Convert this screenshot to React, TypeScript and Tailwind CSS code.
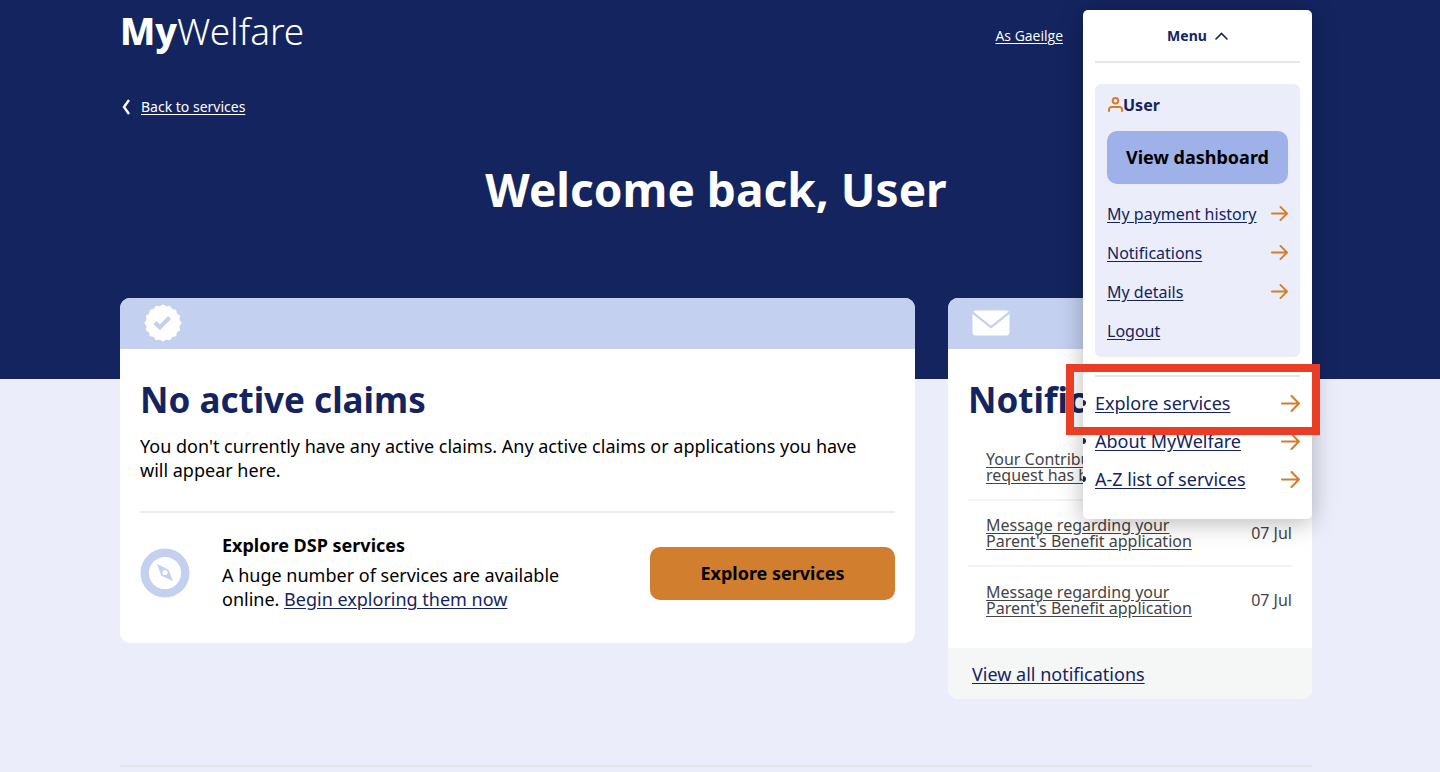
const accountLinks = [
  { label: 'My payment history', arrow: true },
  { label: 'Notifications', arrow: true },
  { label: 'My details', arrow: true },
  { label: 'Logout', arrow: false },
]

const siteLinks = ['Explore services', 'About MyWelfare', 'A-Z list of services']

const notifications = [
  { title: 'Your Contribution Record request has been received', date: '07 Jul' },
  { title: "Message regarding your Parent's Benefit application", date: '07 Jul' },
  { title: "Message regarding your Parent's Benefit application", date: '07 Jul' },
]

function sealPath(points: number, outer: number, inner: number) {
  const steps = points * 2
  const coords = Array.from({ length: steps }, (_, i) => {
    const r = i % 2 ? inner : outer
    const a = (i / steps) * Math.PI * 2
    return `${(19 + r * Math.cos(a)).toFixed(2)} ${(19 + r * Math.sin(a)).toFixed(2)}`
  })
  return `M${coords.join('L')}Z`
}

function SealIcon() {
  return (
    <svg width="38" height="38" viewBox="0 0 38 38" aria-hidden="true">
      <path d={sealPath(16, 17.8, 16)} fill="#fff" stroke="#fff" strokeWidth="1.4" strokeLinejoin="round" />
      <path d="M11 18.5l5 5 9.5-10" fill="none" stroke="#c4d0f0" strokeWidth="4" />
    </svg>
  )
}

function MailIcon() {
  return (
    <svg width="38" height="26" viewBox="0 0 38 26" aria-hidden="true">
      <rect x="0.5" y="0.5" width="37" height="25" rx="3.5" fill="#fff" />
      <path d="M0 2.2L19 17 38 2.2" fill="none" stroke="#c4d0f0" strokeWidth="2.2" />
    </svg>
  )
}

function CompassIcon() {
  return (
    <svg width="50" height="50" viewBox="0 0 50 50" className="shrink-0" aria-hidden="true">
      <circle cx="25" cy="25" r="20.3" fill="#fff" stroke="#c4d0f0" strokeWidth="8.4" />
      <path d="M17 16l11.6 5.8L33 33l-11.6-5.2z" fill="#c4d0f0" />
      <circle cx="25" cy="24.5" r="2.6" fill="#fff" />
    </svg>
  )
}

function UserIcon() {
  return (
    <svg width="16" height="16" viewBox="0 0 16 16" fill="none" stroke="#d17f2e" strokeWidth="2" strokeLinecap="round" aria-hidden="true">
      <circle cx="8.5" cy="3.8" r="2.8" />
      <path d="M2 14v-1.500a2.500 2.500 0 0 1 2.500-2.500h8a2.500 2.500 0 0 1 2.500 2.500v1.500" />
    </svg>
  )
}

function Arrow({ size }: { size: number }) {
  return (
    <svg width={size} height={size} viewBox="0 0 18 18" fill="none" stroke="#d17f2e" strokeWidth="2" strokeLinecap="round" strokeLinejoin="round" aria-hidden="true">
      <path d="M1 9h16M10 2l7 7-7 7" />
    </svg>
  )
}

function MenuPanel() {
  return (
    <nav className="absolute inset-x-0 top-0 z-10 overflow-hidden rounded-[5px] bg-white px-3 pb-[21px] text-[#14245f] shadow-[0_4px_24px_rgba(0,0,0,0.28)]">
      <button className="flex h-[53px] w-full items-center justify-center gap-2 border-b-2 border-[#e6e6e6] text-sm font-bold">
        Menu
        <svg width="13" height="8" viewBox="0 0 13 8" fill="none" stroke="currentColor" strokeWidth="1.6" strokeLinecap="round" aria-hidden="true">
          <path d="M1 7l5.500-5.500L12 7" />
        </svg>
      </button>

      <div className="mt-[21px] rounded-md bg-[#ebeefa] px-3 pt-[11px] pb-[7px]">
        <div className="flex h-5 items-center text-base font-bold">
          <UserIcon />
          User
        </div>
        <button className="mt-4 h-[53px] w-full rounded-[10px] bg-[#9eb1e8] pb-0.5 text-lg font-bold text-black">
          View dashboard
        </button>
        <ul className="mt-[10px]">
          {accountLinks.map((link) => (
            <li key={link.label} className="flex h-[39px] items-center justify-between">
              <a href="#" className="text-base underline underline-offset-2">
                {link.label}
              </a>
              {link.arrow && <Arrow size={17} />}
            </li>
          ))}
        </ul>
      </div>

      <ul className="mt-[18px] border-t-2 border-[#e6e6e6] pt-[7px] text-lg">
        {siteLinks.map((label) => (
          <li key={label} className="relative flex h-[38px] items-center justify-between">
            {/* bullet hangs over the panel edge and gets clipped */}
            <span className="absolute -left-[15px] size-1.5 rounded-full bg-[#14245f]" />
            <a href="#" className="underline underline-offset-2">
              {label}
            </a>
            <Arrow size={19} />
          </li>
        ))}
      </ul>
    </nav>
  )
}

function ClaimsCard() {
  return (
    <section className="flex-1 overflow-hidden rounded-[10px] bg-white">
      <div className="flex h-[51px] items-center bg-[#c4d0f0] pb-px pl-6">
        <SealIcon />
      </div>
      <div className="px-5 pt-[27px] pb-8">
        <h2 className="text-[35px] leading-[48px] font-bold text-[#14245f]">No active claims</h2>
        <p className="mt-[10px] max-w-[740px] text-lg leading-6">
          You don't currently have any active claims. Any active claims or applications you have will appear here.
        </p>
        <hr className="mt-[29px] border-t-2 border-[#ececec]" />
        <div className="mt-[22px] flex items-center">
          <CompassIcon />
          <div className="-mt-0.5 ml-8 w-[360px] text-lg leading-6">
            <h3 className="mb-1.5 font-bold">Explore DSP services</h3>
            <p>
              A huge number of services are available online.{' '}
              <a href="#" className="text-[#14245f] underline underline-offset-2">
                Begin exploring them now
              </a>
            </p>
          </div>
          <button className="ml-auto h-[53px] w-[245px] rounded-[10px] bg-[#d17f2e] text-lg font-bold">
            Explore services
          </button>
        </div>
      </div>
    </section>
  )
}

function NotificationsCard() {
  return (
    <section className="w-[364px] overflow-hidden rounded-[10px] bg-white">
      <div className="flex h-[51px] items-center bg-[#c4d0f0] pb-px pl-6">
        <MailIcon />
      </div>
      <div className="px-5 pt-[27px] pb-[15px]">
        <h2 className="text-[35px] leading-[48px] font-bold text-[#14245f]">Notifications</h2>
        <ul className="mt-[11px] divide-y-2 divide-[#f1f3f4] text-base leading-4 text-[#444]">
          {notifications.map((item, i) => (
            <li key={i} className="flex h-[66px] items-center justify-between pl-[18px]">
              <a href="#" className="w-[212px] underline underline-offset-2">
                {item.title}
              </a>
              <span>{item.date}</span>
            </li>
          ))}
        </ul>
      </div>
      <div className="flex h-[51px] items-center bg-[#f5f6f6] px-6">
        <a href="#" className="text-lg text-[#14245f] underline underline-offset-2">
          View all notifications
        </a>
      </div>
    </section>
  )
}

export default function App() {
  return (
    <div className="min-h-screen bg-[#ebeefa] font-['Noto_Sans','Open_Sans',sans-serif] text-black">
      <header className="bg-[#14245f] pt-[10px] pr-32 pb-[160px] pl-30 text-white">
        <div className="flex items-start justify-between">
          <a href="#" className="text-[37px] leading-[42px] font-light">
            <span className="font-extrabold">My</span>Welfare
          </a>
          <div className="flex">
            <a href="#" className="mt-4 mr-5 font-['Open_Sans','Noto_Sans',sans-serif] text-sm underline underline-offset-2">
              As Gaeilge
            </a>
            <div className="relative h-[53px] w-[229px]">
              <MenuPanel />
              <div className="pointer-events-none absolute top-[354px] -right-2 -left-[17px] z-20 h-[71px] border-8 border-[#e93e25]" />
            </div>
          </div>
        </div>
        <a href="#" className="mt-[34px] flex w-fit items-center gap-2 text-sm leading-5">
          <svg width="13" height="16" viewBox="0 0 13 16" fill="none" stroke="#fff" strokeWidth="2.4" aria-hidden="true">
            <path d="M9 1L4 8l5 7" />
          </svg>
          <span className="underline underline-offset-2">Back to services</span>
        </a>
        <h1 className="mt-[42px] text-center text-[46px] leading-[60px] font-bold">Welcome back, User</h1>
      </header>

      <main className="-mt-[81px] pr-32 pb-1 pl-30">
        <div className="flex items-start gap-[33px]">
          <ClaimsCard />
          <NotificationsCard />
        </div>
        <hr className="mt-[66px] border-t-2 border-[#e4e7ea]" />
      </main>
    </div>
  )
}
